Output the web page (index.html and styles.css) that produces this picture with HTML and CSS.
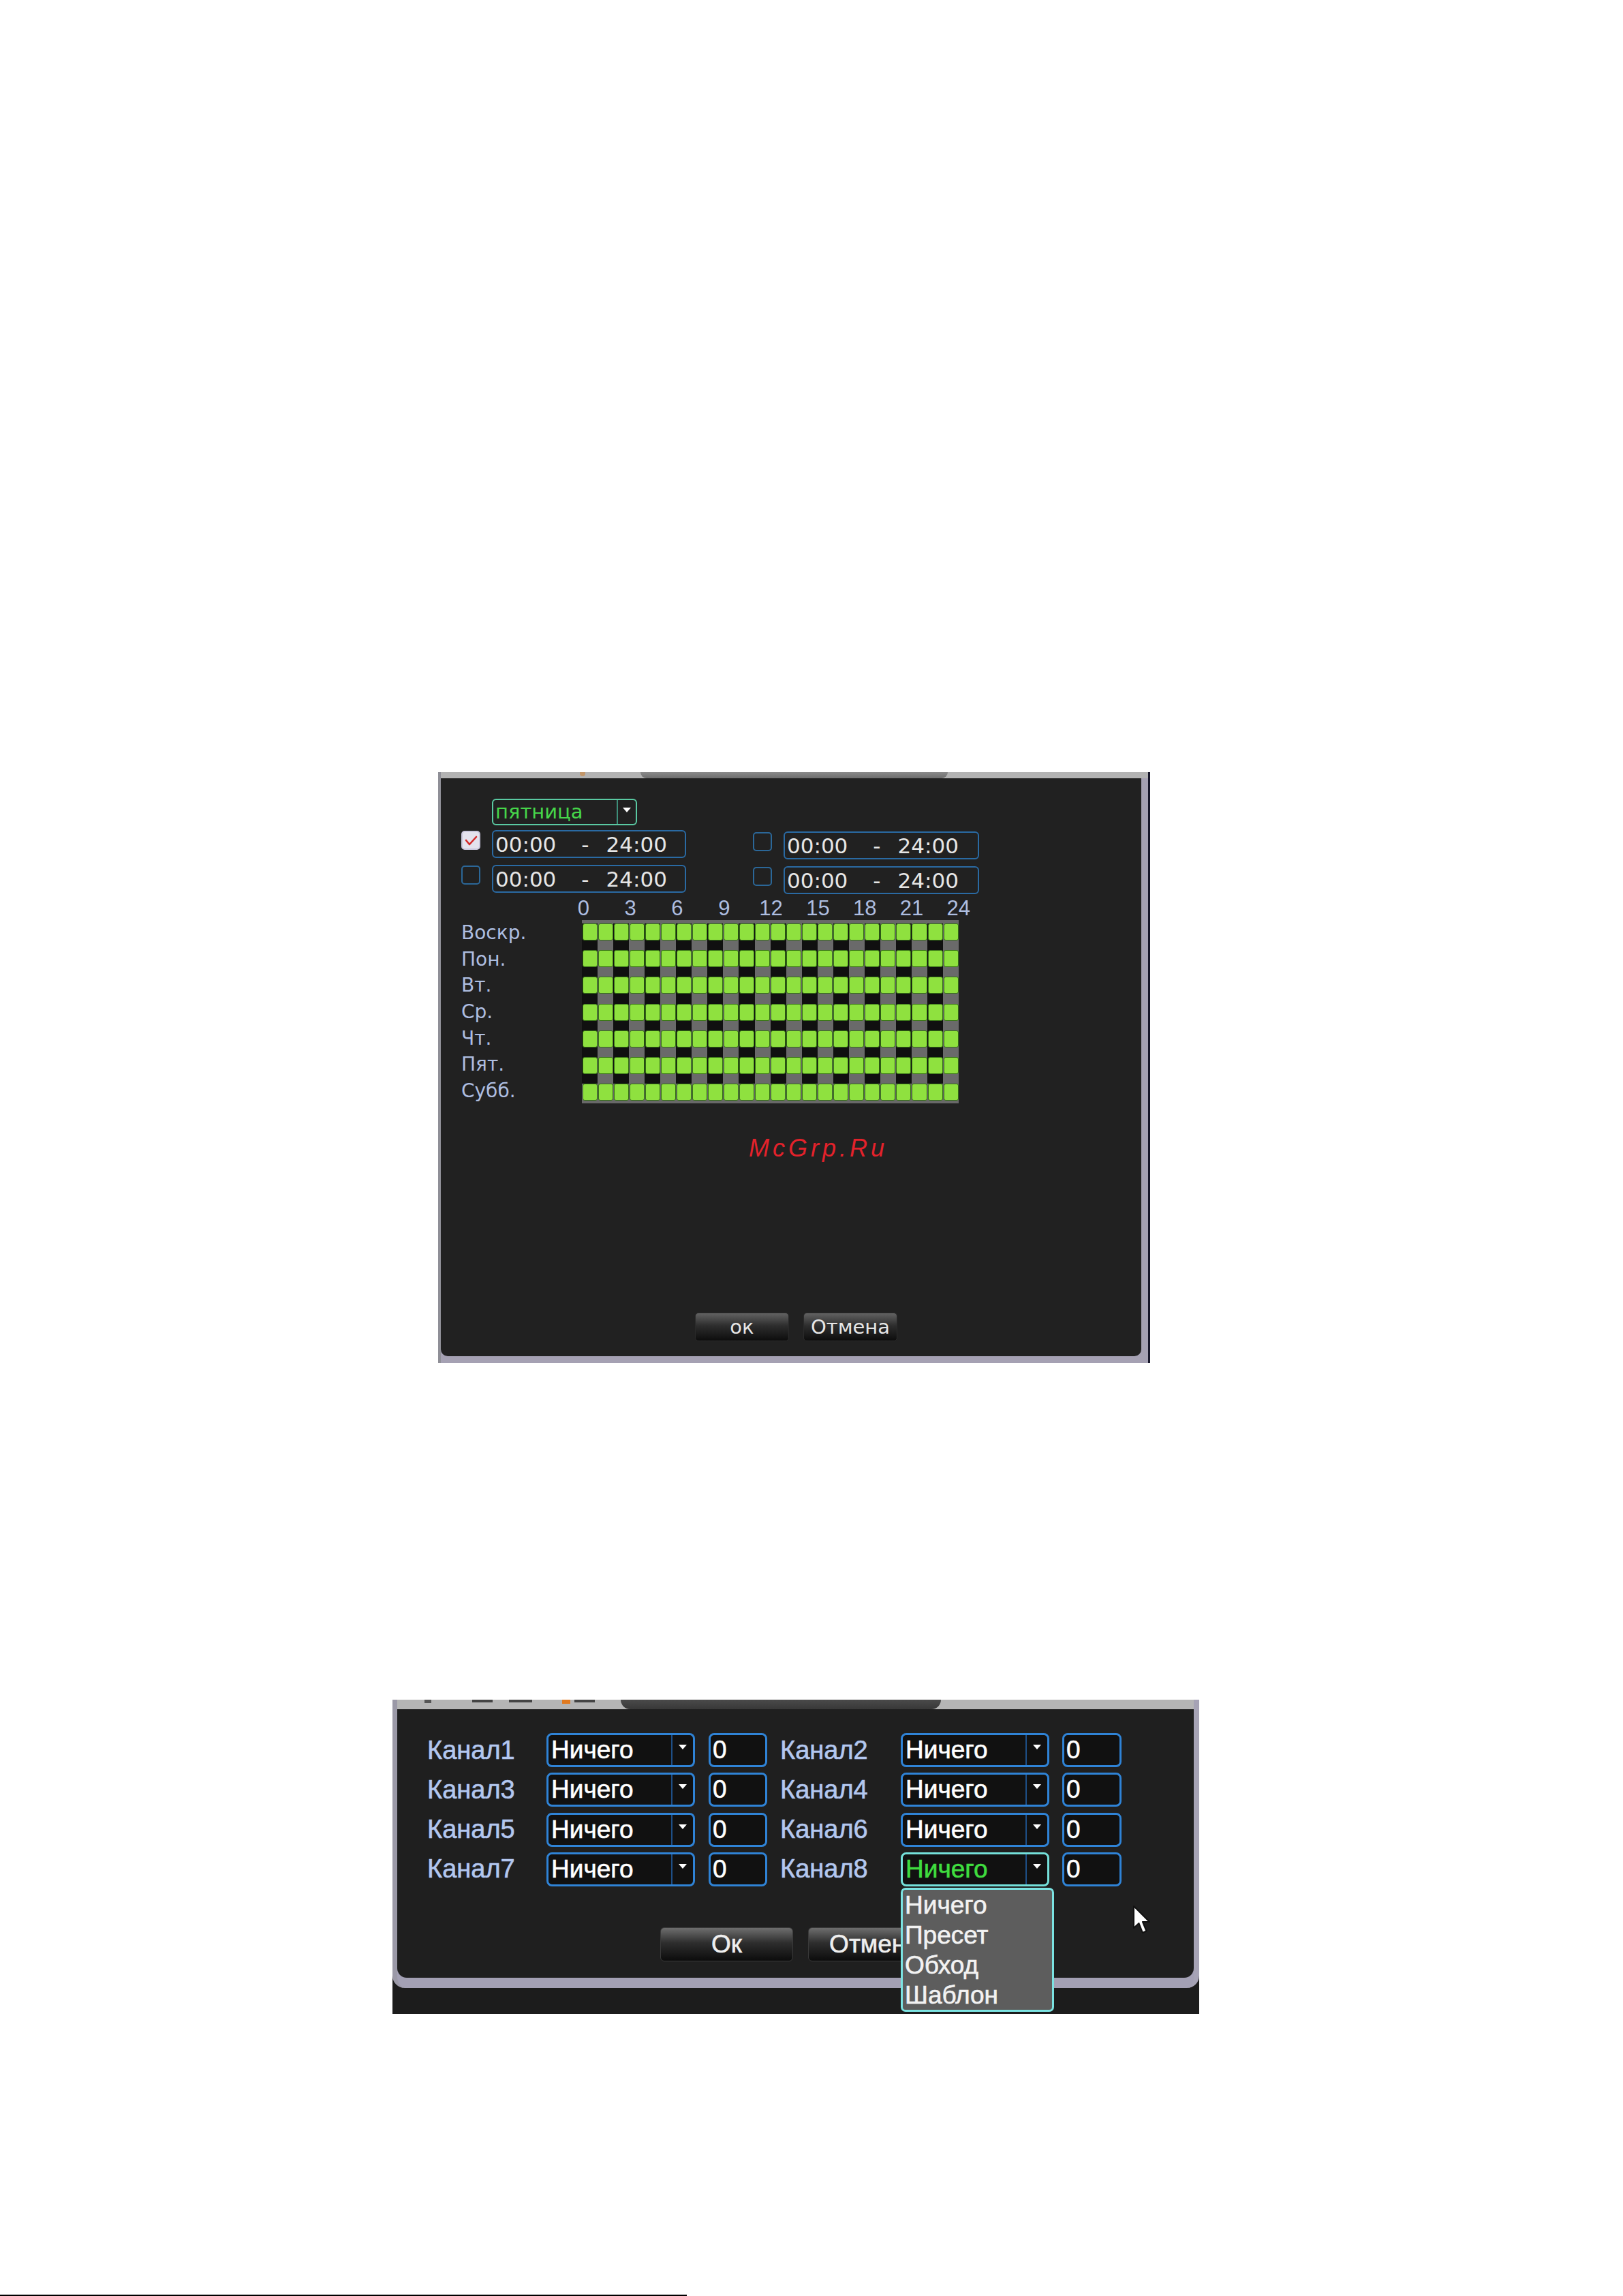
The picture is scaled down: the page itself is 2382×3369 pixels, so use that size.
FILE: index.html
```html
<!DOCTYPE html>
<html lang="ru">
<head>
<meta charset="utf-8">
<title>Расписание и PTZ</title>
<link rel="stylesheet" href="styles.css">
</head>
<body>
<div class="page">

  <section class="win1">
    <div class="strip1"><span class="s1-dot"></span><span class="s1-pill"></span></div>
    <div class="body1">
      <div class="daysel">
        <span class="daysel-val">пятница</span>
        <span class="dd-btn"><svg width="12" height="8" viewBox="0 0 12 8"><polygon points="0,0 12,0 6,7" fill="#ffffff"/></svg></span>
      </div>

      <div class="periods">
        <div class="pcol">
          <div class="prow">
            <span class="cb cb-on"><svg width="24" height="24" viewBox="0 0 24 24"><path d="M5 12 L10 18 L20 7" fill="none" stroke="#d42a2a" stroke-width="2.6" stroke-linecap="round" stroke-linejoin="round"/></svg></span>
            <div class="tbox"><span>00:00</span><span class="dash">-</span><span>24:00</span></div>
          </div>
          <div class="prow">
            <span class="cb"></span>
            <div class="tbox"><span>00:00</span><span class="dash">-</span><span>24:00</span></div>
          </div>
        </div>
        <div class="pcol pcol-r">
          <div class="prow">
            <span class="cb"></span>
            <div class="tbox"><span>00:00</span><span class="dash">-</span><span>24:00</span></div>
          </div>
          <div class="prow">
            <span class="cb"></span>
            <div class="tbox"><span>00:00</span><span class="dash">-</span><span>24:00</span></div>
          </div>
        </div>
      </div>

      <div class="hours"><span>0</span><span>3</span><span>6</span><span>9</span><span>12</span><span>15</span><span>18</span><span>21</span><span>24</span></div>

      <div class="sched">
        <div class="days">
          <div>Воскр.</div><div>Пон.</div><div>Вт.</div><div>Ср.</div><div>Чт.</div><div>Пят.</div><div>Субб.</div>
        </div>
        <div class="grid">
          <div class="grow"><i></i><i></i><i></i><i></i><i></i><i></i><i></i><i></i><i></i><i></i><i></i><i></i><i></i><i></i><i></i><i></i><i></i><i></i><i></i><i></i><i></i><i></i><i></i><i></i></div>
          <div class="grow"><i></i><i></i><i></i><i></i><i></i><i></i><i></i><i></i><i></i><i></i><i></i><i></i><i></i><i></i><i></i><i></i><i></i><i></i><i></i><i></i><i></i><i></i><i></i><i></i></div>
          <div class="grow"><i></i><i></i><i></i><i></i><i></i><i></i><i></i><i></i><i></i><i></i><i></i><i></i><i></i><i></i><i></i><i></i><i></i><i></i><i></i><i></i><i></i><i></i><i></i><i></i></div>
          <div class="grow"><i></i><i></i><i></i><i></i><i></i><i></i><i></i><i></i><i></i><i></i><i></i><i></i><i></i><i></i><i></i><i></i><i></i><i></i><i></i><i></i><i></i><i></i><i></i><i></i></div>
          <div class="grow"><i></i><i></i><i></i><i></i><i></i><i></i><i></i><i></i><i></i><i></i><i></i><i></i><i></i><i></i><i></i><i></i><i></i><i></i><i></i><i></i><i></i><i></i><i></i><i></i></div>
          <div class="grow"><i></i><i></i><i></i><i></i><i></i><i></i><i></i><i></i><i></i><i></i><i></i><i></i><i></i><i></i><i></i><i></i><i></i><i></i><i></i><i></i><i></i><i></i><i></i><i></i></div>
          <div class="grow"><i></i><i></i><i></i><i></i><i></i><i></i><i></i><i></i><i></i><i></i><i></i><i></i><i></i><i></i><i></i><i></i><i></i><i></i><i></i><i></i><i></i><i></i><i></i><i></i></div>
        </div>
      </div>

      <div class="wm">McGrp.Ru</div>

      <div class="btns1">
        <button class="btn1">ок</button>
        <button class="btn1">Отмена</button>
      </div>
    </div>
  </section>

  <section class="win2wrap">
    <div class="win2">
      <div class="strip2">
        <span class="s2-a"></span><span class="s2-b"></span><span class="s2-c"></span><span class="s2-o"></span><span class="s2-d"></span>
        <span class="s2-pill"></span>
      </div>
      <div class="body2">
        <div class="crows">
          <div class="crow">
            <span class="lbl">Канал1</span>
            <div class="sel"><span class="sel-val">Ничего</span><span class="sel-arrow"><svg width="12" height="8" viewBox="0 0 12 8"><polygon points="0,0 12,0 6,7" fill="#ffffff"/></svg></span></div>
            <span class="num">0</span>
            <span class="lbl lbl2">Канал2</span>
            <div class="sel"><span class="sel-val">Ничего</span><span class="sel-arrow"><svg width="12" height="8" viewBox="0 0 12 8"><polygon points="0,0 12,0 6,7" fill="#ffffff"/></svg></span></div>
            <span class="num num2">0</span>
          </div>
          <div class="crow">
            <span class="lbl">Канал3</span>
            <div class="sel"><span class="sel-val">Ничего</span><span class="sel-arrow"><svg width="12" height="8" viewBox="0 0 12 8"><polygon points="0,0 12,0 6,7" fill="#ffffff"/></svg></span></div>
            <span class="num">0</span>
            <span class="lbl lbl2">Канал4</span>
            <div class="sel"><span class="sel-val">Ничего</span><span class="sel-arrow"><svg width="12" height="8" viewBox="0 0 12 8"><polygon points="0,0 12,0 6,7" fill="#ffffff"/></svg></span></div>
            <span class="num num2">0</span>
          </div>
          <div class="crow">
            <span class="lbl">Канал5</span>
            <div class="sel"><span class="sel-val">Ничего</span><span class="sel-arrow"><svg width="12" height="8" viewBox="0 0 12 8"><polygon points="0,0 12,0 6,7" fill="#ffffff"/></svg></span></div>
            <span class="num">0</span>
            <span class="lbl lbl2">Канал6</span>
            <div class="sel"><span class="sel-val">Ничего</span><span class="sel-arrow"><svg width="12" height="8" viewBox="0 0 12 8"><polygon points="0,0 12,0 6,7" fill="#ffffff"/></svg></span></div>
            <span class="num num2">0</span>
          </div>
          <div class="crow">
            <span class="lbl">Канал7</span>
            <div class="sel"><span class="sel-val">Ничего</span><span class="sel-arrow"><svg width="12" height="8" viewBox="0 0 12 8"><polygon points="0,0 12,0 6,7" fill="#ffffff"/></svg></span></div>
            <span class="num">0</span>
            <span class="lbl lbl2">Канал8</span>
            <div class="sel sel-active"><span class="sel-val">Ничего</span><span class="sel-arrow"><svg width="12" height="8" viewBox="0 0 12 8"><polygon points="0,0 12,0 6,7" fill="#ffffff"/></svg></span></div>
            <span class="num num2">0</span>
          </div>
        </div>
        <div class="btns2">
          <button class="btn2">Ок</button>
          <button class="btn2">Отмена</button>
        </div>
      </div>
    </div>

    <ul class="ddlist">
      <li>Ничего</li>
      <li>Пресет</li>
      <li>Обход</li>
      <li>Шаблон</li>
    </ul>

    <svg class="cursor" width="28" height="46" viewBox="0 0 28 46">
      <path d="M2 2 L2 34 L9.5 27 L15 41 L20.5 38.5 L15 25 L25 25 Z" fill="#ffffff" stroke="#111111" stroke-width="2" stroke-linejoin="round"/>
    </svg>
  </section>

  <div class="baseline"></div>
</div>
</body>
</html>
```

FILE: styles.css
```css
html, body {
  margin: 0;
  padding: 0;
  background: #ffffff;
  overflow: hidden;
}

.page {
  width: 2382px;
  height: 3369px;
  padding-top: 1133px;
  box-sizing: border-box;
}

/* ---------- Window 1: schedule ---------- */
.win1 {
  margin-left: 643px;
  width: 1045px;
  height: 867px;
  box-sizing: border-box;
  background: #a5a1b3;
  border-left: 4px solid #8f8f97;
  border-right: 3px solid #17172a;
}

.strip1 {
  height: 9px;
  background: #b3b3b3;
  display: flex;
}

.s1-dot {
  width: 8px;
  height: 6px;
  margin-left: 204px;
  background: #c98a4a;
  border-radius: 0 0 4px 4px;
  opacity: 0.7;
}

.s1-pill {
  width: 451px;
  margin-left: 81px;
  background: linear-gradient(#8a8a8a, #6e6e6e);
  border-radius: 0 0 12px 12px;
}

.body1 {
  width: 1028px;
  height: 848px;
  box-sizing: border-box;
  background: #212121;
  border-radius: 0 0 10px 10px;
  padding: 30px 0 22px 30px;
  display: flex;
  flex-direction: column;
  font-family: "DejaVu Sans", "Liberation Sans", sans-serif;
}

.daysel {
  margin-left: 45px;
  width: 213px;
  height: 39px;
  box-sizing: border-box;
  border: 2px solid #5ac9a2;
  border-radius: 6px;
  display: flex;
}

.daysel-val {
  flex: 1;
  color: #46d64a;
  font-size: 29px;
  line-height: 35px;
  padding-left: 3px;
  border-right: 2px solid #3e8f7a;
}

.dd-btn {
  width: 26px;
  display: flex;
  align-items: center;
  justify-content: center;
  padding-bottom: 6px;
}

.periods {
  display: flex;
  gap: 98px;
  margin-top: 7px;
}

.pcol {
  display: flex;
  flex-direction: column;
  gap: 10px;
}

.pcol-r {
  margin-top: 2px;
}

.prow {
  display: flex;
  align-items: flex-start;
  gap: 17px;
}

.cb {
  width: 28px;
  height: 28px;
  margin-top: 1px;
  box-sizing: border-box;
  border: 2px solid #2b6798;
  border-radius: 5px;
  display: flex;
  align-items: center;
  justify-content: center;
}

.cb-on {
  background: #e4e2ee;
  border-color: #c9c6dc;
}

.tbox {
  width: 285px;
  height: 41px;
  box-sizing: border-box;
  border: 2px solid #2a6aa3;
  border-radius: 6px;
  display: flex;
  align-items: center;
  padding-left: 3px;
  font-size: 31px;
  color: #e6e6e6;
}

.pcol-r .tbox {
  width: 287px;
}

.dash {
  margin: 0 25px 0 37px;
}

.hours {
  display: flex;
  margin-top: 4px;
  margin-left: 145px;
  height: 34px;
  font-family: "Liberation Sans", Arial, sans-serif;
  font-size: 31px;
  line-height: 34px;
  color: #aebee0;
}

.hours span {
  width: 68.8px;
  text-align: center;
}

.sched {
  display: flex;
}

.days {
  width: 177px;
  padding-top: 5px;
  color: #aebee0;
  font-size: 28px;
}

.days div {
  height: 38.7px;
  line-height: 28px;
}

.grid {
  width: 553px;
  height: 269px;
  box-sizing: border-box;
  padding-top: 5px;
  background: #686868;
  display: flex;
  flex-direction: column;
}

.grow {
  display: flex;
  height: 39.2px;
  flex: none;
}

.grow:last-child {
  height: 29px;
}

.grow i {
  flex: 1;
  background: #101010;
}

.grow i:nth-child(even) {
  background: #6a6a6a;
}

.grow:last-child i {
  background: #686868;
}

.grow i::before {
  content: "";
  display: block;
  height: 25px;
  margin: 0 0.5px;
  box-sizing: border-box;
  background: #8fe13f;
  border: 1.5px solid #356f16;
  border-radius: 3px;
}

.wm {
  margin-top: 39px;
  margin-left: 422px;
  height: 40px;
  font-family: "Liberation Sans", Arial, sans-serif;
  font-style: italic;
  font-size: 36px;
  line-height: 40px;
  letter-spacing: 5px;
  color: #e3222b;
}

.btns1 {
  margin-top: auto;
  margin-left: 343px;
  display: flex;
  gap: 21px;
}

.btn1 {
  width: 138px;
  height: 42px;
  padding: 0;
  box-sizing: border-box;
  border: 1px solid #2a2a2a;
  border-radius: 5px;
  background: linear-gradient(#626262, #2e2e2e 45%, #0d0d0d);
  color: #e6e6e6;
  font-family: "DejaVu Sans", sans-serif;
  font-size: 29px;
  line-height: 38px;
}

/* ---------- Window 2: PTZ linkage ---------- */
.win2wrap {
  position: relative;
  margin-top: 494px;
  margin-left: 576px;
  width: 1184px;
  height: 461px;
  background: #1c1c1c;
  font-family: "Liberation Sans", Arial, sans-serif;
}

.win2 {
  height: 423px;
  box-sizing: border-box;
  background: #a3a0b4;
  border-left: 7px solid #9b99a7;
  border-right: 8px solid #a6a3b5;
  border-radius: 0 0 18px 18px;
}

.strip2 {
  height: 14px;
  background: #b5b5b5;
  display: flex;
  align-items: flex-start;
}

.s2-a {
  width: 10px;
  height: 5px;
  margin-left: 40px;
  background: #555;
}

.s2-b {
  width: 30px;
  height: 4px;
  margin-left: 60px;
  background: #444;
}

.s2-c {
  width: 34px;
  height: 4px;
  margin-left: 24px;
  background: #444;
}

.s2-o {
  width: 12px;
  height: 6px;
  margin-left: 44px;
  background: #e07a20;
}

.s2-d {
  width: 30px;
  height: 4px;
  margin-left: 6px;
  background: #444;
}

.s2-pill {
  width: 470px;
  height: 14px;
  margin-left: 38px;
  background: linear-gradient(#4a4a4a, #383838);
  border-radius: 0 0 14px 14px;
}

.body2 {
  height: 394px;
  box-sizing: border-box;
  background: #1f1f1f;
  border-radius: 0 0 14px 14px;
  padding: 35px 0 0 44px;
  -webkit-text-stroke: 0.6px currentColor;
}

.crows {
  display: flex;
  flex-direction: column;
  gap: 8.3px;
}

.crow {
  display: flex;
  align-items: center;
  height: 50px;
}

.lbl {
  width: 175px;
  font-size: 38px;
  color: #b3c7ef;
}

.lbl2 {
  width: 196px;
  box-sizing: border-box;
  padding-left: 19px;
}

.sel {
  width: 218px;
  height: 50px;
  box-sizing: border-box;
  border: 3px solid #2f83d6;
  border-radius: 8px;
  background: #111111;
  display: flex;
}

.sel-val {
  width: 182px;
  box-sizing: border-box;
  padding-left: 4px;
  font-size: 37px;
  line-height: 44px;
  color: #ffffff;
  border-right: 2px solid #1e4f86;
}

.sel-arrow {
  flex: 1;
  display: flex;
  align-items: center;
  justify-content: center;
  padding-bottom: 8px;
}

.sel-active {
  border-color: #74e0da;
}

.sel-active .sel-val {
  color: #3fdc3f;
}

.num {
  width: 86px;
  height: 50px;
  margin-left: 20px;
  box-sizing: border-box;
  border: 3px solid #2f83d6;
  border-radius: 8px;
  background: #111111;
  padding-left: 3px;
  font-size: 37px;
  line-height: 44px;
  color: #ffffff;
}

.num2 {
  width: 87px;
  margin-left: 19px;
}

.btns2 {
  display: flex;
  gap: 22px;
  margin-top: 60px;
  margin-left: 342px;
}

.btn2 {
  width: 195px;
  height: 50px;
  padding: 0;
  box-sizing: border-box;
  border: 1px solid #3a3a3a;
  border-radius: 6px;
  background: linear-gradient(#6e6e6e, #2e2e2e 45%, #0c0c0c);
  color: #eeeeee;
  font-family: "Liberation Sans", Arial, sans-serif;
  font-size: 37px;
  line-height: 46px;
  -webkit-text-stroke: 0.6px #eeeeee;
}

.ddlist {
  position: absolute;
  left: 746px;
  top: 276px;
  width: 225px;
  height: 182px;
  margin: 0;
  padding: 1px 0 0 3px;
  box-sizing: border-box;
  list-style: none;
  border: 3px solid #7be3e2;
  border-radius: 7px;
  background: #5d5d5d;
  font-size: 37px;
  line-height: 44px;
  color: #f2f2f2;
  -webkit-text-stroke: 0.6px #f2f2f2;
}

.cursor {
  position: absolute;
  left: 1086px;
  top: 301px;
}

.baseline {
  margin-top: 412px;
  width: 1008px;
  height: 2px;
  background: #000000;
}
```
